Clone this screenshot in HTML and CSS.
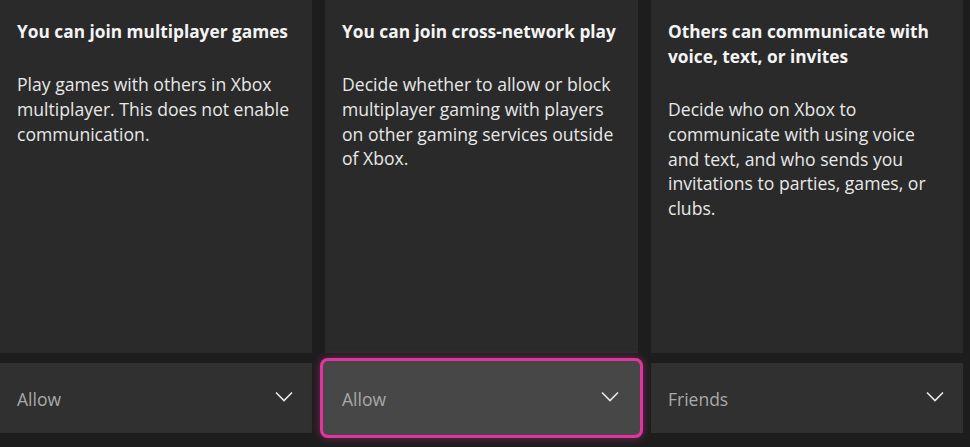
FILE: index.html
```html
<!DOCTYPE html>
<html>
<head>
<meta charset="utf-8">
<link rel="stylesheet" href="styles.css">
</head>
<body>
<div class="grid">
  <div class="col">
    <div class="card">
      <h2 class="title">You can join multiplayer games</h2>
      <p class="desc">Play games with others in Xbox multiplayer. This does not enable communication.</p>
    </div>
    <div class="select">
      <span class="value">Allow</span>
      <svg class="chev" width="18" height="11" viewBox="0 0 18 11"><path d="M1 1.5 L9 9.5 L17 1.5" fill="none" stroke="#e8e8e8" stroke-width="1.6"/></svg>
    </div>
  </div>
  <div class="col">
    <div class="card">
      <h2 class="title">You can join cross-network play</h2>
      <p class="desc">Decide whether to allow or block multiplayer gaming with players on other gaming services outside of Xbox.</p>
    </div>
    <div class="select focused">
      <span class="value">Allow</span>
      <svg class="chev" width="18" height="11" viewBox="0 0 18 11"><path d="M1 1.5 L9 9.5 L17 1.5" fill="none" stroke="#e8e8e8" stroke-width="1.6"/></svg>
    </div>
  </div>
  <div class="col">
    <div class="card">
      <h2 class="title">Others can communicate with voice, text, or invites</h2>
      <p class="desc">Decide who on Xbox to communicate with using voice and text, and who sends you invitations to parties, games, or clubs.</p>
    </div>
    <div class="select">
      <span class="value">Friends</span>
      <svg class="chev" width="18" height="11" viewBox="0 0 18 11"><path d="M1 1.5 L9 9.5 L17 1.5" fill="none" stroke="#e8e8e8" stroke-width="1.6"/></svg>
    </div>
  </div>
</div>
</body>
</html>
```

FILE: styles.css
```css
html, body {
  margin: 0;
  padding: 0;
  background: #1d1d1d;
  width: 970px;
  height: 447px;
  overflow: hidden;
  font-family: "Open Sans", "Noto Sans", "Liberation Sans", sans-serif;
}

.grid {
  display: grid;
  grid-template-columns: 312px 313px 312px;
  column-gap: 13px;
  padding-right: 7px;
  height: 447px;
}

.col {
  display: flex;
  flex-direction: column;
}

.card {
  background: #2a2a2a;
  height: 353px;
  box-sizing: border-box;
  padding: 19px 20px 0 17px;
}

.title {
  margin: 0;
  font-size: 17.3px;
  font-weight: 700;
  line-height: 25px;
  color: #f4f4f4;
}

.desc {
  margin: 28px 0 0;
  font-size: 17.6px;
  font-weight: 400;
  line-height: 24.8px;
  color: #e8e8e8;
}

.select {
  margin-top: 10px;
  height: 70px;
  background: #303030;
  display: flex;
  align-items: center;
  justify-content: space-between;
  padding: 0 19px 0 17px;
  box-sizing: border-box;
}

.select .value {
  font-size: 17.5px;
  color: #a9a9a9;
  margin-top: 2px;
}

.chev {
  display: block;
  margin-top: -3px;
}

.select.focused {
  background: #474747;
  border-radius: 3px;
  box-shadow:
    0 0 0 2px #474747,
    0 0 0 5px #e0359e,
    0 0 9px 5px rgba(224, 53, 158, 0.45);
}
```
